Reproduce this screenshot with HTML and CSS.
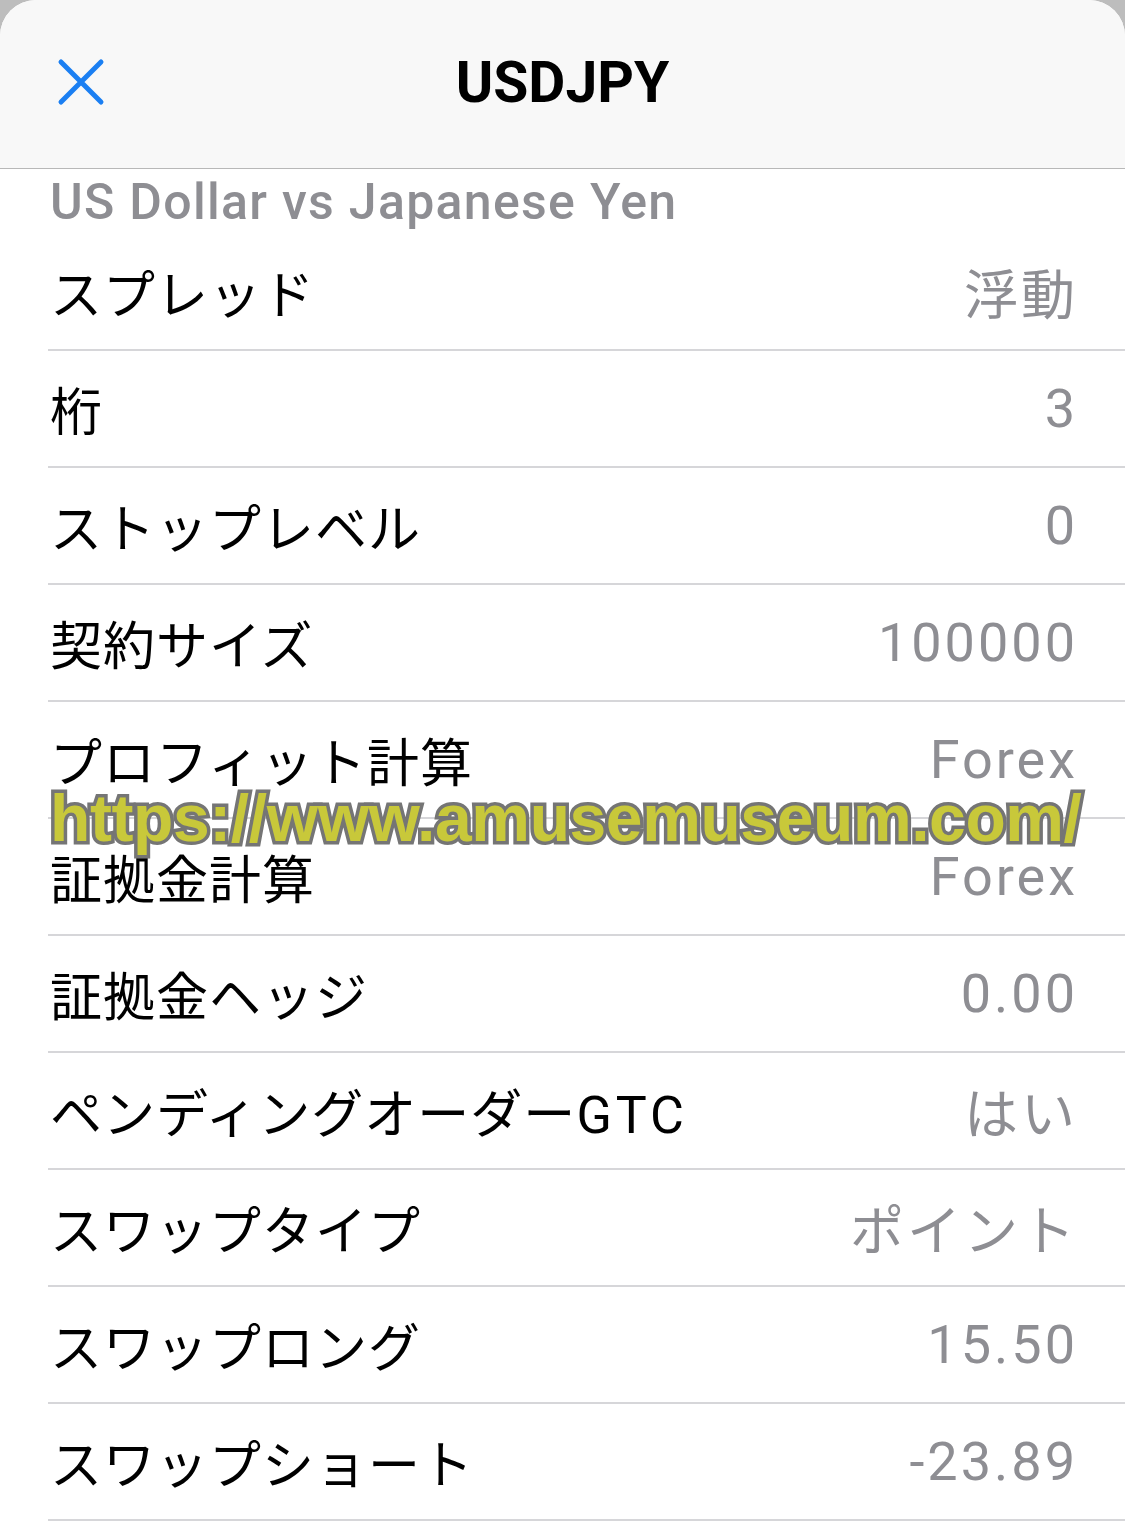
FILE: index.html
```html
<!DOCTYPE html>
<html lang="ja">
<head>
<meta charset="utf-8">
<title>USDJPY</title>
<link rel="stylesheet" href="styles.css">
</head>
<body>
<div class="sheet">
  <header class="nav">
    <button class="close" aria-label="閉じる">
      <svg width="48" height="48" viewBox="0 0 48 48"><path d="M4 4 L44 44 M44 4 L4 44" stroke="#1b7ff2" stroke-width="5" stroke-linecap="round" fill="none"/></svg>
    </button>
    <h1 class="title">USDJPY</h1>
  </header>
  <div class="subtitle">US Dollar vs Japanese Yen</div>
  <ul class="list">
    <li class="row"><span class="label">スプレッド</span><span class="value">浮動</span></li>
    <li class="row"><span class="label">桁</span><span class="value">3</span></li>
    <li class="row"><span class="label">ストップレベル</span><span class="value">0</span></li>
    <li class="row"><span class="label">契約サイズ</span><span class="value">100000</span></li>
    <li class="row"><span class="label">プロフィット計算</span><span class="value">Forex</span></li>
    <li class="row"><span class="label">証拠金計算</span><span class="value">Forex</span></li>
    <li class="row"><span class="label">証拠金ヘッジ</span><span class="value">0.00</span></li>
    <li class="row"><span class="label">ペンディングオーダー<span class="latin">GTC</span></span><span class="value">はい</span></li>
    <li class="row"><span class="label">スワップタイプ</span><span class="value">ポイント</span></li>
    <li class="row"><span class="label">スワップロング</span><span class="value">15.50</span></li>
    <li class="row"><span class="label">スワップショート</span><span class="value">-23.89</span></li>
  </ul>
  <div class="watermark">https://www.amusemuseum.com/</div>
</div>
</body>
</html>
```
FILE: styles.css
```css
* { box-sizing: border-box; }
html, body { margin: 0; padding: 0; }
body {
  background: #bdbdbd;
  font-family: "Roboto", "Noto Sans CJK JP", sans-serif;
  width: 1125px;
  height: 1528px;
  overflow: hidden;
}
.sheet {
  position: relative;
  background: #ffffff;
  border-radius: 36px 36px 0 0;
  overflow: hidden;
  height: 1528px;
}
.nav {
  position: relative;
  height: 169px;
  background: #f8f8f8;
  border-bottom: 1px solid #b8b8b8;
  display: flex;
  align-items: center;
  justify-content: center;
}
.close {
  position: absolute;
  left: 57px;
  top: 58px;
  border: 0;
  padding: 0;
  background: none;
  width: 48px;
  height: 48px;
}
.close svg { display: block; }
.title {
  margin: 0 0 4px 0;
  font-size: 57px;
  font-weight: 700;
  color: #000;
}
.subtitle {
  height: 65px;
  padding-left: 50px;
  font-size: 50px;
  font-weight: 500;
  letter-spacing: 1.3px;
  color: #8e8e93;
  display: flex;
  align-items: center;
  padding-bottom: 0;
}
.list {
  list-style: none;
  margin: 0;
  padding: 0;
}
.row {
  margin-left: 48px;
  height: 117px;
  border-bottom: 2px solid #d6d6d9;
  display: flex;
  align-items: center;
  justify-content: space-between;
  padding: 0 50px 0 2px;
}
.label {
  font-size: 52px;
  color: #000;
  font-weight: 400;
  letter-spacing: 1px;
}
.latin {
  letter-spacing: 4px;
}
.value {
  font-size: 54px;
  color: #8e8e93;
  font-weight: 400;
  letter-spacing: 3px;
  margin-right: -3px;
}
.watermark {
  position: absolute;
  left: 50px;
  top: 780px;
  font-family: "Liberation Sans", sans-serif;
  font-weight: 700;
  font-size: 66px;
  letter-spacing: -0.4px;
  color: #c8c83a;
  -webkit-text-stroke: 7px #757575;
  paint-order: stroke fill;
  white-space: nowrap;
}
```
